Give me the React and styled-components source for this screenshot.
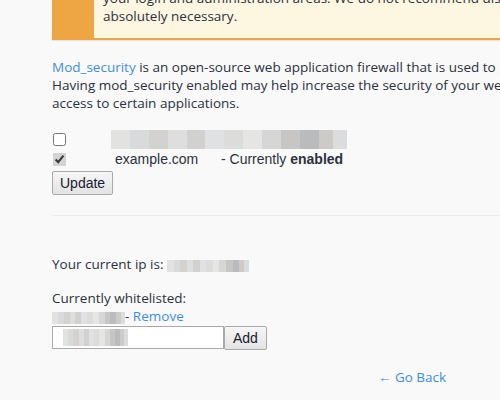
import React from 'react';
import styled, { createGlobalStyle } from 'styled-components';

const Global = createGlobalStyle`
  html, body {
    margin: 0;
    padding: 0;
    background: #f9f9f9;
    overflow: hidden;
  }
  body {
    font-family: "Open Sans", "Liberation Sans", sans-serif;
    font-size: 13.5px;
    line-height: 18px;
    color: #2b3140;
  }
`;

const Page = styled.div`
  width: 720px;
  margin: -11px 0 0 52px;
`;

const Notice = styled.div`
  display: flex;
  background: #fdf7e1;
  border-bottom: 2px solid #f0a441;
  box-shadow: 0 1px 1px rgba(0, 0, 0, 0.08);
`;

const NoticeBar = styled.div`
  width: 42px;
  flex-shrink: 0;
  background: #eea543;
`;

const NoticeText = styled.p`
  margin: 0;
  padding: 0 0 13px 9px;
`;

const Intro = styled.p`
  margin: 18px 0 0;
`;

const Link = styled.a`
  color: #3e8fdb;
  text-decoration: none;
`;

const DomainTable = styled.table`
  border-collapse: collapse;
  margin: 17px 0 2px;
  font-family: "Liberation Sans", Arial, sans-serif;
  font-size: 14px;
  td {
    padding: 0;
    height: 20px;
    vertical-align: middle;
  }
`;

const Check = styled.input`
  margin: 0 1px;
  width: 13px;
  height: 13px;
  display: block;
  accent-color: #d4d4d4;
`;

const Blur = styled.span`
  display: inline-block;
  vertical-align: middle;
  width: ${p => p.$w}px;
  height: ${p => p.$h}px;
  background: linear-gradient(
    90deg,
    #e2e2e0 0 8%, #d9dadc 8% 16%, #d4d2cf 16% 24%, #dedede 24% 32%,
    #d1d1cf 32% 40%, #e0e1e3 40% 48%, #dcdcdb 48% 56%, #e5e5e3 56% 64%,
    #d6d6d6 64% 72%, #c8c6c4 72% 80%, #b9bbbd 80% 88%, #cdcac7 88% 94%,
    #dadcdd 94% 100%
  );
`;

const Hidden = styled.td`
  padding-left: 44px !important;
`;

const Domain = styled.td`
  padding-left: 48px !important;
  width: 106px;
`;

const Status = styled.td`
  strong {
    font-weight: 700;
  }
`;

const Button = styled.button`
  font-family: "Liberation Sans", Arial, sans-serif;
  font-size: 14px;
  color: #1a2030;
  background: linear-gradient(#f6f6f6, #e3e3e3);
  border: 1px solid #a9a9a9;
  border-radius: 2px;
  height: 24px;
  padding: 0 ${p => p.$pad || 7}px;
`;

const Divider = styled.hr`
  border: 0;
  border-top: 1px solid #ececec;
  margin: 20px 0 0;
`;

const Line = styled.p`
  margin: ${p => p.$top || 0}px 0 0;
`;

const IpBlur = styled(Blur)`
  vertical-align: -3px;
`;

const AddRow = styled.div`
  display: flex;
  margin-top: 1px;
`;

const Input = styled.div`
  width: 160px;
  height: 21px;
  background: #fff;
  border: 1px solid #a9a9a9;
  display: flex;
  align-items: center;
  padding-left: 10px;
`;

const Back = styled.div`
  text-align: center;
  margin-top: 18px;
`;

export default function App() {
  return (
    <>
      <Global />
      <Page>
        <Notice>
          <NoticeBar />
          <NoticeText>
            your login and administration areas. We do not recommend disabling mod_security unless
            <br />
            absolutely necessary.
          </NoticeText>
        </Notice>

        <Intro>
          <Link href="#">Mod_security</Link> is an open-source web application firewall that is used to protect websites.
          <br />
          Having mod_security enabled may help increase the security of your website but it may block
          <br />
          access to certain applications.
        </Intro>

        <form>
          <DomainTable>
            <tbody>
              <tr>
                <td><Check type="checkbox" /></td>
                <Hidden colSpan={2}><Blur $w={236} $h={19} /></Hidden>
              </tr>
              <tr>
                <td><Check type="checkbox" defaultChecked /></td>
                <Domain>example.com</Domain>
                <Status>- Currently <strong>enabled</strong></Status>
              </tr>
            </tbody>
          </DomainTable>
          <Button type="button">Update</Button>
        </form>

        <Divider />

        <Line $top={39}>
          Your current ip is: <IpBlur $w={82} $h={12} />
        </Line>
        <Line $top={16}>Currently whitelisted:</Line>
        <Line>
          <IpBlur $w={73} $h={12} />- <Link href="#">Remove</Link>
        </Line>
        <AddRow>
          <Input><Blur $w={65} $h={17} /></Input>
          <Button type="button" $pad={8}>Add</Button>
        </AddRow>

        <Back>
          <Link href="#">← Go Back</Link>
        </Back>
      </Page>
    </>
  );
}
